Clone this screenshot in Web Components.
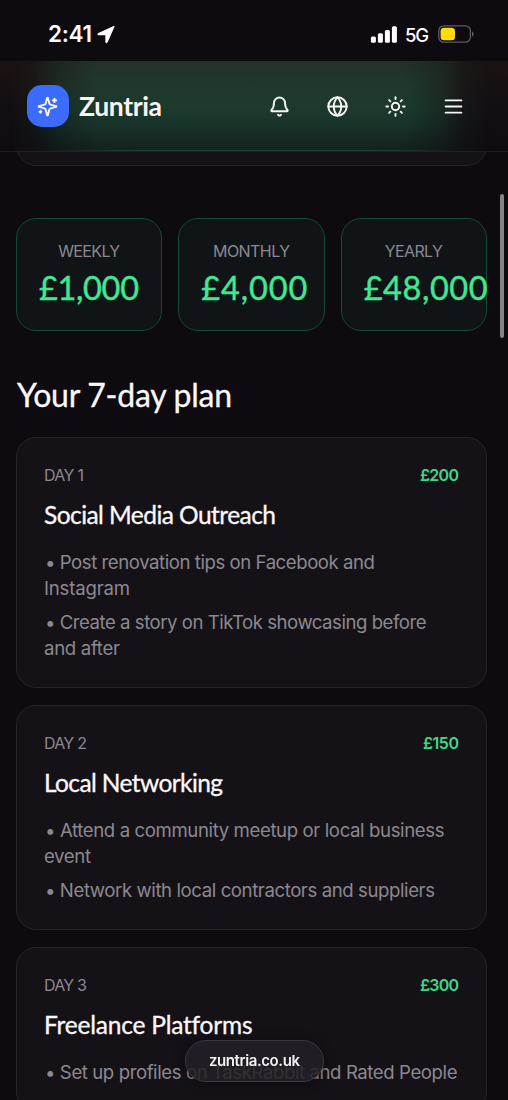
<!DOCTYPE html>
<html lang="en"><head><meta charset="utf-8"><title>Zuntria</title>
<style>html,body{margin:0;height:1100px;overflow:hidden;background:#0d0a10}</style></head>
<body><zuntria-app></zuntria-app>
<script>
const define=(name,html,extra)=>customElements.define(name,class extends HTMLElement{
  constructor(){super();this.attachShadow({mode:'open'}).innerHTML=html;}
  connectedCallback(){if(extra)extra(this,this.shadowRoot);}
});

/* One line of text, tracked to span the width given in its attribute. */
define('text-line',`<style>:host{display:block;white-space:pre}:host([bullet]){padding-left:1px}span{display:inline-block}</style><span><slot></slot></span>`,(el,root)=>{
  const w=+el.getAttribute('width'),s=root.querySelector('span');
  const n=el.textContent.length,now=s.getBoundingClientRect().width;
  if(w&&now){const ls=(w-now)/(n-1);s.style.letterSpacing=ls+'px';s.style.marginRight=-ls+'px';}
});

define('status-bar',`<style>
:host{display:flex;height:61px;box-sizing:border-box;padding:7px 34px 0 48px;align-items:center;justify-content:space-between;color:#fff;font-family:Inter,sans-serif}
div{display:flex;align-items:center}
.t{font-size:22.500px;font-weight:600;line-height:28px}.g{font-size:18.500px;font-weight:500;line-height:24px;margin:1px 9px 0 8px}
.l{margin-left:5px}svg{display:block}
</style><div><text-line class="t" width="44">2:41</text-line>
<svg class="l" width="19" height="19" viewBox="0 0 19 19"><path d="M16.9 1.5 10.2 16.8Q9.4 18.2 9 16.8V9.7H1.8Q.3 9.300 1.700 8.500Z" fill="#fff" stroke="#fff" stroke-width="1.300" stroke-linejoin="round"/></svg></div>
<div><svg width="27" height="17" viewBox="0 0 27 17" fill="#fff"><rect x=".9" y="10.5" width="5" height="6.3" rx="1.5"/><rect x="7.900" y="7.3" width="5" height="9.5" rx="1.5"/><rect x="14.900" y="4" width="5" height="12.8" rx="1.5"/><rect x="21.900" y=".3" width="5" height="16.5" rx="1.5"/></svg>
<text-line class="g" width="24">5G</text-line>
<svg width="36" height="18" viewBox="0 0 36 18"><rect x=".8" y=".8" width="31.6" height="16.4" rx="5" fill="none" stroke="#5d5b61" stroke-width="1.3"/><rect x="2.6" y="2.8" width="14.4" height="12.4" rx="3.5" fill="#ffdc08"/><path d="M34 6.2q1.8 1.2 1.8 2.8T34 11.8z" fill="#5d5b61"/></svg></div>`);

const icons={
bell:'<path d="M10.3 21.500a2 2 0 0 0 3.4 0M2.900 15.800A1 1 0 0 0 3.600 17.500h16.800a1 1 0 0 0 .7-1.7C19.600 14.300 18.300 12.700 18.300 8A6.300 6.300 0 0 0 5.700 8c0 4.700-1.300 6.300-2.800 7.800"/>',
globe:'<circle cx="12" cy="12" r="10.500"/><path d="M12 1.500a15 15 0 0 0 0 21 15 15 0 0 0 0-21M1.500 12h21"/>',
sun:'<circle cx="12" cy="12" r="4.200"/><path d="M12 1.500v2M12 20.500v2M4.700 4.700l1.400 1.400M17.900 17.900l1.400 1.400M1.500 12h2M20.500 12h2M6.100 17.900l-1.400 1.400M19.300 4.700l-1.400 1.400"/>',
menu:'<path d="M3 5h18M3 12h18M3 19h18"/>',
sparkles:'<path d="M9.900 15.500A2 2 0 0 0 8.500 14.100L2.400 12.500a.5.5 0 0 1 0-1L8.500 9.900A2 2 0 0 0 9.900 8.500l1.600-6.100a.5.5 0 0 1 1 0L14.100 8.500A2 2 0 0 0 15.500 9.900l6.100 1.600a.5.5 0 0 1 0 1L15.500 14.100a2 2 0 0 0-1.400 1.400l-1.600 6.100a.5.5 0 0 1-1 0zM20 3v4M22 5h-4M4 17v2M5 18H3"/>'};
define('line-icon',`<style>:host{display:block;width:21px;height:21px}svg{display:block;width:100%;height:100%;fill:none;stroke:currentColor;stroke-width:2.200;stroke-linecap:round;stroke-linejoin:round}</style><svg viewBox="0 0 24 24"></svg>`,(el,root)=>{root.querySelector('svg').innerHTML=icons[el.getAttribute('name')];});

define('app-header',`<style>
:host{display:flex;position:relative;z-index:1;box-sizing:border-box;height:91px;padding:0 44.500px 0 26.500px;align-items:center;justify-content:space-between;color:#f8f5f7;border-bottom:1px solid #211f23;overflow:hidden;
background:linear-gradient(#1b1212,#120e12 60%,#0f0c11)}
:host::before{content:"";position:absolute;inset:0;background:linear-gradient(#213129 0%,#20392b 28%,#1c3a2d 52%,#18332a 72%,#14241f 94%,#15231f);
-webkit-mask-image:linear-gradient(90deg,transparent 10px,#0003 36px,#000a 58px,#000 95px,#000 405px,#000a 440px,#0003 464px,transparent 492px)}
:host::after{content:"";position:absolute;left:60px;right:60px;bottom:0;height:1px;background:linear-gradient(90deg,transparent,#1d4232 20%,#1d4232 80%,transparent)}
div{display:flex;position:relative;align-items:center}
.logo{width:42px;height:42px;border-radius:15px;background:#3b6cff;justify-content:center}
.name{margin-left:10.500px;font:700 26.500px/34px Lato,sans-serif}
.nav{gap:37px}</style>
<div><div class="logo"><line-icon name="sparkles"></line-icon></div><text-line class="name" width="83">Zuntria</text-line></div>
<div class="nav"><line-icon name="bell"></line-icon><line-icon name="globe"></line-icon><line-icon name="sun"></line-icon><line-icon name="menu"></line-icon></div>`);

define('stat-card',`<style>
:host{display:flex;flex-direction:column;align-items:center;box-sizing:border-box;height:113px;min-width:0;padding:22px 22px 0;border:1px solid #134a35;border-radius:20px;background:#101416}
.k{font:400 16px/21px Inter,sans-serif;color:#8b8891}
.v{align-self:flex-start;margin-top:5px;font:400 32.500px/42px Lato,sans-serif;color:#40e896;-webkit-text-stroke:.4px}
</style><text-line class="k"></text-line><text-line class="v"></text-line>`,(el,root)=>{
 for(const k of ['k','v']){const n=root.querySelector('.'+k),[t,w]=el.getAttribute(k).split('|');const c=document.createElement('text-line');c.className=k;c.textContent=t;c.setAttribute('width',w);n.replaceWith(c);}
});

define('day-card',`<style>
:host{display:block;box-sizing:border-box;padding:27px 26px 26.500px 27px;border:1px solid #262329;border-radius:20px;background:#151217}
.top{display:flex;justify-content:space-between;height:21px;line-height:21px;font-family:Inter,sans-serif;font-size:16px;color:#8b8891}
.amt{font-weight:600;color:#3bd98c;margin-right:1px}
.title{margin-top:11px;font:400 24.500px/36px Lato,sans-serif;color:#fbf8fc;-webkit-text-stroke:.3px}
.list{display:flex;flex-direction:column;gap:8px;margin-top:16px;font:400 18.600px/26px Inter,sans-serif;color:#8b8891}
</style><div class="top"></div><div class="title"></div><div class="list"><slot></slot></div>`,(el,root)=>{
 const add=(attr,parent,cls)=>{const [t,w]=el.getAttribute(attr).split('|'),c=document.createElement('text-line');c.className=cls||'';c.textContent=t;c.setAttribute('width',w);root.querySelector(parent).append(c);};
 add('day','.top');add('amount','.top','amt');add('heading','.title');
});

define('address-pill',`<style>:host{display:block;position:absolute;z-index:3;left:185px;top:1040px;width:139px;height:42px;box-sizing:border-box;border:1px solid #3a373e;border-radius:21px;background:#232026dc;text-align:center;color:#f4f2f5;font:600 15px/40px Inter,sans-serif;backdrop-filter:blur(.6px);box-shadow:0 1px 12px #0006}</style><text-line width="91">zuntria.co.uk</text-line>`);
define('scroll-thumb',`<style>:host{display:block;position:absolute;z-index:3;right:4px;top:194px;width:4px;height:144px;border-radius:2px;background:#858386}</style>`);

define('zuntria-app',`<style>
:host{display:block;position:relative;width:508px;height:1100px;overflow:hidden;background:#0d0a10}
main{display:flex;flex-direction:column;padding:0 21px 0 16px}
.peek{height:34px;margin-top:-20.500px;box-sizing:border-box;border:1px solid #262329;border-radius:0 0 20px 20px;background:#151217}
.stats{display:grid;grid-template-columns:repeat(3,minmax(0,1fr));gap:16px;margin-top:52.500px}
h2{margin:42.500px 0 21px 1px;font:400 32px/42px Lato,sans-serif;color:#fbf8fc;-webkit-text-stroke:.3px}
.plan{display:flex;flex-direction:column;gap:16.500px}
</style><status-bar></status-bar><app-header></app-header>
<main><div class="peek"></div>
<div class="stats"><stat-card k="WEEKLY|62" v="£1,000|100"></stat-card><stat-card k="MONTHLY|77" v="£4,000|106"></stat-card><stat-card k="YEARLY|58" v="£48,000|124"></stat-card></div>
<h2><text-line width="215">Your 7-day plan</text-line></h2>
<div class="plan">
<day-card day="DAY 1|40" amount="£200|39" heading="Social Media Outreach|232"><div><text-line bullet width="330">• Post renovation tips on Facebook and</text-line><text-line width="86">Instagram</text-line></div><div><text-line bullet width="381.5">• Create a story on TikTok showcasing before</text-line><text-line width="76">and after</text-line></div></day-card>
<day-card day="DAY 2|43" amount="£150|36" heading="Local Networking|179"><div><text-line bullet width="399.5">• Attend a community meetup or local business</text-line><text-line width="47">event</text-line></div><div><text-line bullet width="390">• Network with local contractors and suppliers</text-line></div></day-card>
<day-card day="DAY 3|43" amount="£300|39" heading="Freelance Platforms|208"><div><text-line bullet width="412.5">• Set up profiles on TaskRabbit and Rated People</text-line></div></day-card>
</div></main><scroll-thumb></scroll-thumb><address-pill></address-pill>`);
</script></body></html>
